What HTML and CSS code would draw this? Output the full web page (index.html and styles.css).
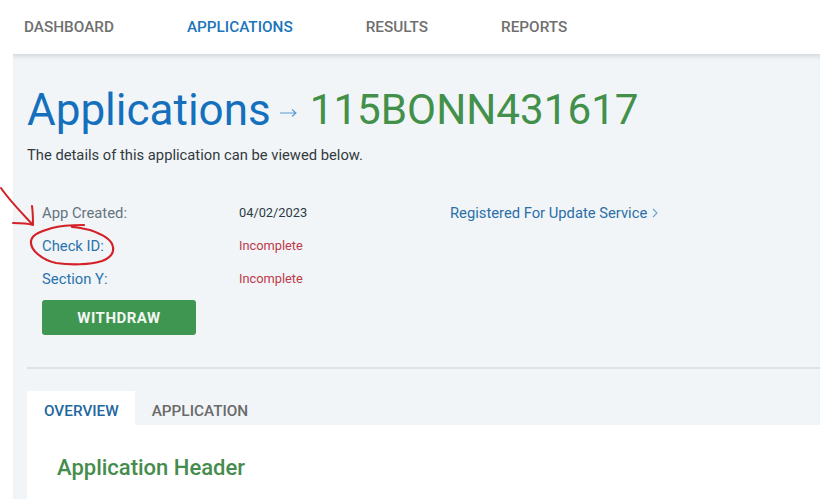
FILE: index.html
```html
<!DOCTYPE html>
<html lang="en">
<head>
<meta charset="utf-8">
<title>Application details</title>
<link rel="stylesheet" href="styles.css">
</head>
<body>
<nav class="nav">
  <a class="nav-item">DASHBOARD</a>
  <a class="nav-item active">APPLICATIONS</a>
  <a class="nav-item">RESULTS</a>
  <a class="nav-item">REPORTS</a>
</nav>
<main class="main">
  <h1 class="title"><span class="crumb">Applications</span><span class="arrow"><svg viewBox="0 0 17 10" width="17" height="10"><path d="M0 5h16M12 1.5l4 3.5-4 3.5" fill="none" stroke="#5b9bd5" stroke-width="1.1"/></svg></span><span class="code">115BONN431617</span></h1>
  <p class="lead">The details of this application can be viewed below.</p>
  <section class="details">
    <div class="label">App Created:</div>
    <div class="value">04/02/2023</div>
    <a class="service">Registered For Update Service<svg class="chev" viewBox="0 0 6 10" width="6" height="10"><path d="M1 1l4 4-4 4" fill="none" stroke="#6ea3cc" stroke-width="1.1"/></svg></a>
    <a class="label link">Check ID:</a>
    <div class="value bad">Incomplete</div>
    <div></div>
    <a class="label link">Section Y:</a>
    <div class="value bad">Incomplete</div>
    <div></div>
  </section>
  <button class="withdraw">WITHDRAW</button>
  <hr class="rule">
  <div class="tabs">
    <a class="tab current">OVERVIEW</a>
    <a class="tab">APPLICATION</a>
  </div>
  <section class="panel">
    <h2 class="panel-title">Application Header</h2>
  </section>
</main>
<svg class="ink" viewBox="0 0 120 90" width="120" height="90">
  <path d="M1 8C9 20 21 32 33 45M32 26C33 33 33 39 33 45C27 43 20 43 13 43" fill="none" stroke="#d42027" stroke-width="2" stroke-linecap="round" stroke-linejoin="round"/>
  <path d="M84 45C74 45 62 45 52 48C42 51 32 54 31 61C30 70 42 80 56 83C70 85 90 85 102 81C110 78 114 73 113 67C112 60 102 54 90 50C84 49 78 47 72 47" fill="none" stroke="#d42027" stroke-width="2.2" stroke-linecap="round" stroke-linejoin="round"/>
</svg>
</body>
</html>
```

FILE: styles.css
```css
* { box-sizing: border-box; }
html, body { margin: 0; height: 499px; overflow: hidden; }
body {
  background: #fff;
  font-family: Roboto, "Liberation Sans", sans-serif;
  position: relative;
}
.nav {
  height: 54px;
  padding-left: 24px;
  display: flex;
  align-items: center;
  gap: 73px;
  font-size: 15.3px;
  font-weight: 500;
  color: #6f6f6f;
  position: relative;
  z-index: 1;
}
.nav-item.active { color: #1b75bb; }
.main {
  margin-left: 13px;
  height: 445px;
  padding: 0 0 0 14px;
  background: #f1f5f7;
  box-shadow: inset 0 5px 5px -3px rgba(0, 0, 0, .13);
  display: flow-root;
}
.title {
  margin: 29px 0 0;
  height: 54px;
  display: flex;
  align-items: center;
  font-size: 42.2px;
  line-height: 54px;
  font-weight: 400;
}
.crumb { color: #1470bc; font-size: 44px; }
.arrow {
  width: 39px;
  display: flex;
  justify-content: center;
  padding: 6px 3px 0 0;
}
.code { color: #429049; }
.lead {
  margin: 8px 0 0;
  font-size: 14.75px;
  line-height: 20px;
  color: #333a3f;
}
.details {
  margin: 31px 0 0 15px;
  display: grid;
  grid-template-columns: 197px 211px 1fr;
  grid-auto-rows: 33px;
  align-items: center;
}
.label { font-size: 14.8px; color: #667380; }
.label.link { color: #2a73ad; }
.value { font-size: 12.8px; color: #2b3a45; }
.value.bad { color: #c0394b; }
.service {
  font-size: 14.75px;
  color: #2a6fa8;
  display: flex;
  align-items: center;
  gap: 5px;
}
.withdraw {
  display: block;
  margin: 5px 0 0 15px;
  width: 154px;
  height: 35px;
  border: 0;
  border-radius: 3px;
  background: #3f9650;
  color: #f2f7f3;
  font: 700 15px Roboto, "Liberation Sans", sans-serif;
  letter-spacing: .5px;
}
.rule {
  margin: 32px 0 0;
  height: 2px;
  border: 0;
  background: #dde2e4;
}
.tabs {
  margin-top: 22px;
  height: 34px;
  display: flex;
  font-size: 15.3px;
  font-weight: 500;
}
.tab {
  padding: 12px 17px 0;
  color: #6a6a6a;
  line-height: 16px;
}
.tab.current { background: #fff; color: #22689f; padding-right: 16px; }
.panel { background: #fff; height: 80px; padding: 31px 30px 0; }
.panel-title {
  margin: 0;
  font-size: 22px;
  line-height: 24px;
  font-weight: 500;
  color: #458c4d;
}
.ink { position: absolute; left: 0; top: 180px; }
```
